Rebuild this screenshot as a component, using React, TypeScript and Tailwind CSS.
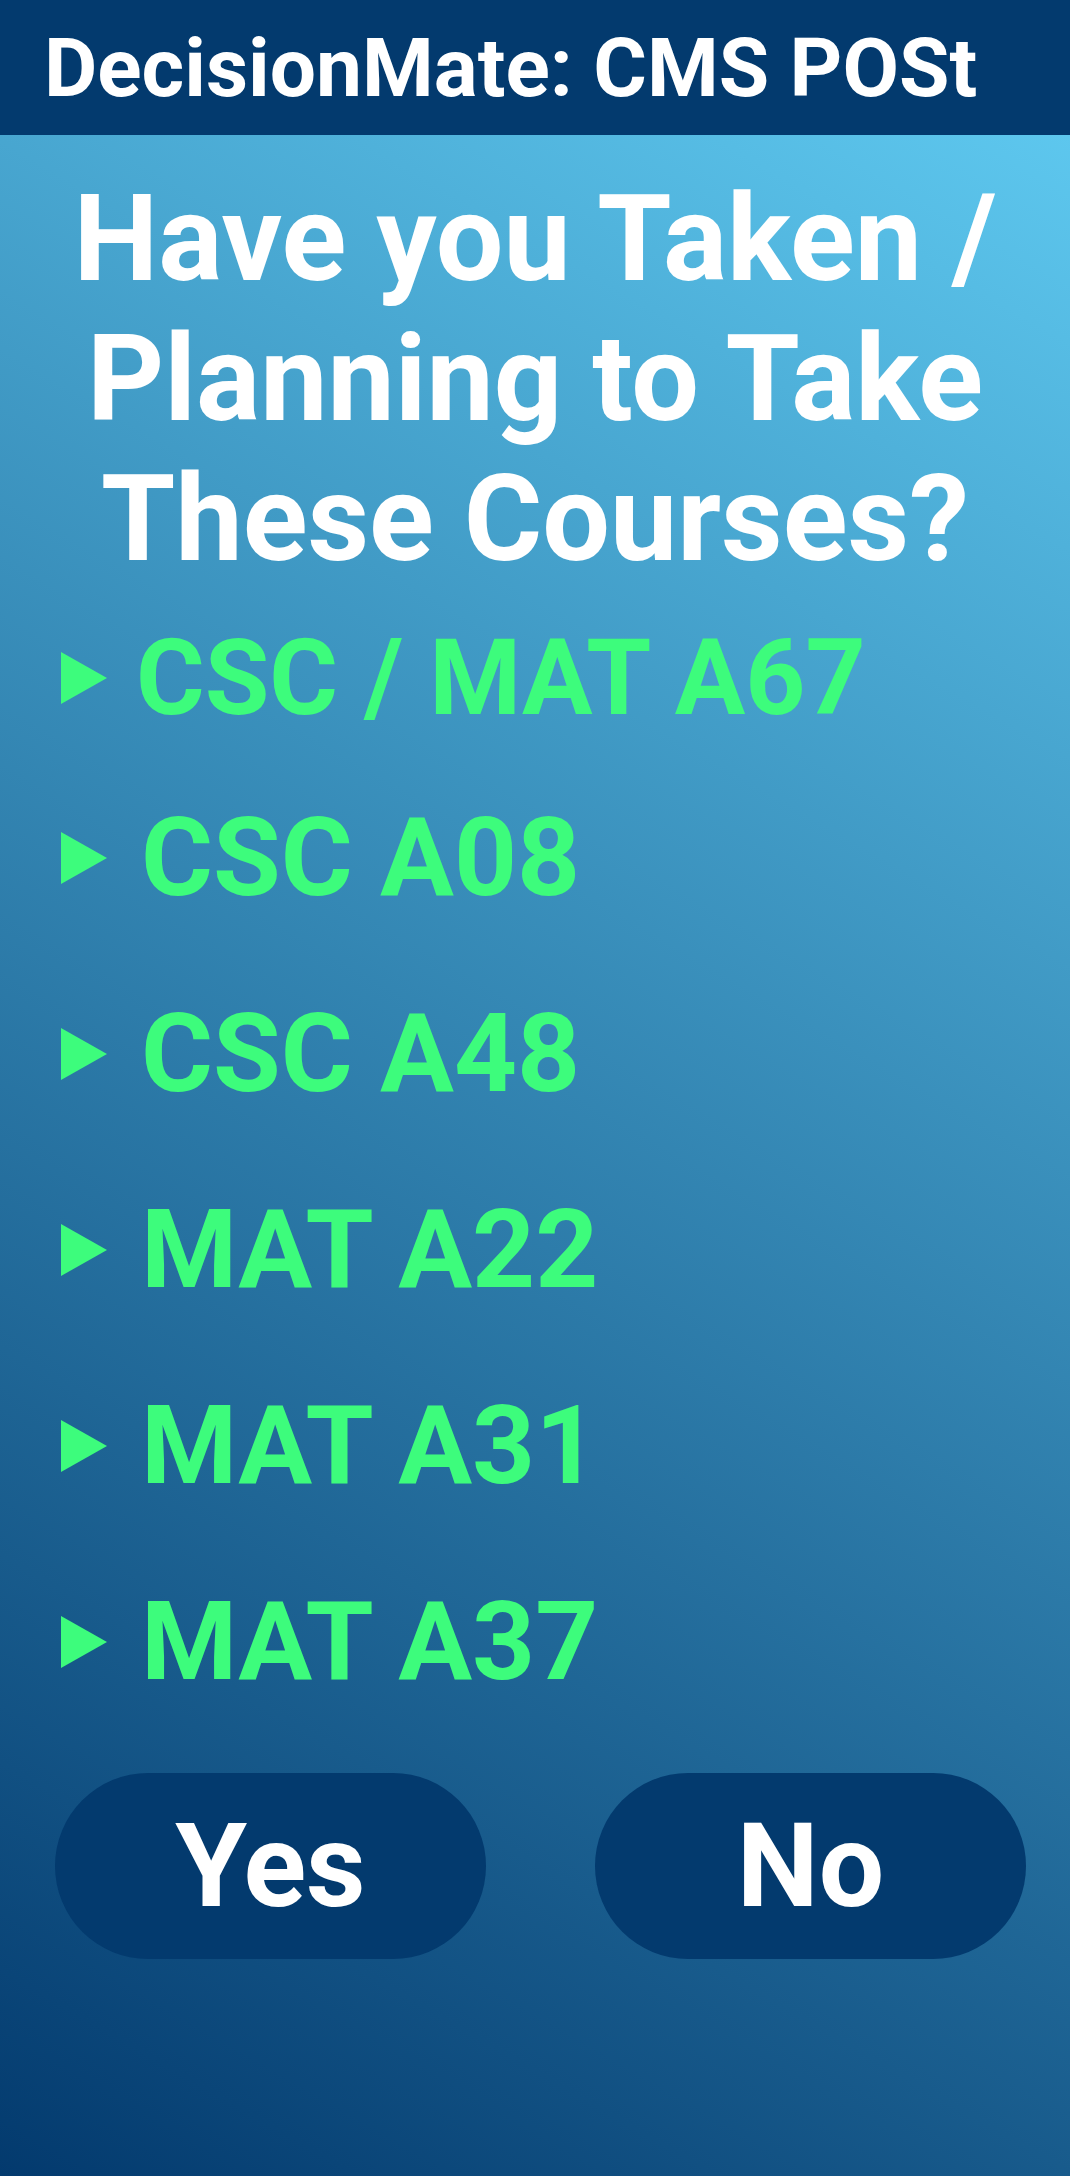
import React from 'react';

const courses = ['CSC / MAT A67', 'CSC A08', 'CSC A48', 'MAT A22', 'MAT A31', 'MAT A37'];

function Arrow() {
  return (
    <svg width="46" height="52" viewBox="0 0 46 52" className="shrink-0">
      <polygon points="0,0 46,26 0,52" fill="#3dfc7c" />
    </svg>
  );
}

export default function App() {
  return (
    <div className="w-[1070px] h-[2176px] flex flex-col font-['Roboto',sans-serif]">
      <header className="h-[135px] shrink-0 bg-[#033a6e] flex items-center pl-[44px]">
        <h2 className="text-white font-bold text-[82px] leading-none">DecisionMate: CMS POSt</h2>
      </header>

      <main className="flex-1 flex flex-col bg-[linear-gradient(210deg,#5dc7ee,#033a6e)]">
        <h1 className="pt-[34px] text-center text-white font-bold text-[120px] leading-[140px]">
          Have you Taken /<br />
          Planning to Take<br />
          These Courses?
        </h1>

        <ul className="mt-[35px] flex flex-col gap-[88px] pl-[61px]">
          {courses.map((c, i) => (
            <li key={c} className={i === 0 ? 'flex items-center gap-[34px] h-[108px] -mb-4' : 'flex items-center gap-[34px] h-[108px]'}>
              <Arrow />
              <span className={i === 0 ? 'text-[#3dfc7c] font-bold text-[105px] leading-none -ml-[5px]' : 'text-[#3dfc7c] font-bold text-[110px] leading-none'}>
                {c}
              </span>
            </li>
          ))}
        </ul>

        <div className="mt-[77px] flex justify-between pl-[55px] pr-[44px]">
          <button className="w-[431px] h-[186px] rounded-full bg-[#033a6e] text-white font-bold text-[116px] leading-none">
            Yes
          </button>
          <button className="w-[431px] h-[186px] rounded-full bg-[#033a6e] text-white font-bold text-[116px] leading-none">
            No
          </button>
        </div>
      </main>
    </div>
  );
}
